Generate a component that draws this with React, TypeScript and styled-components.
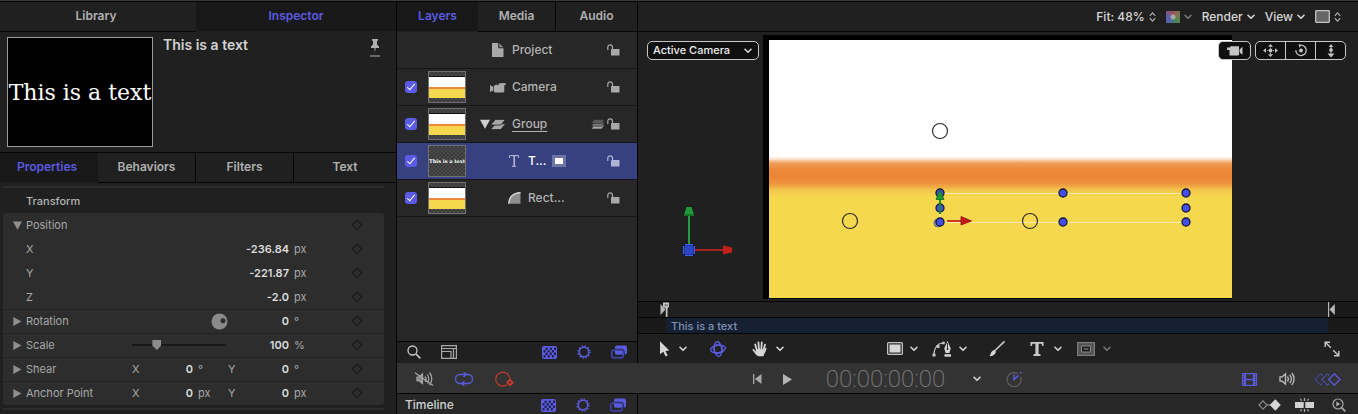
import React from "react";
import styled, { createGlobalStyle, css } from "styled-components";

const accent = "#5b5be0";
const sans = `Inter, "Liberation Sans", sans-serif`;

const GlobalStyle = createGlobalStyle`
  *, *::before, *::after { box-sizing: border-box; }
  body { margin: 0; background: #202020; font-family: ${sans}; font-size: 12px; color: #b4b4b4; }
  button, select, input { font: inherit; color: inherit; }
  h2, ul, p { margin: 0; padding: 0; }
  ul { list-style: none; }
  svg { display: block; flex: none; }
`;

/* ---------- shell ---------- */

const Shell = styled.div`
  display: grid;
  grid-template-columns: 397px minmax(0, 1fr);
  height: 100vh;
  overflow: hidden;
  border-top: 1px solid #383838;
`;

const Main = styled.main`
  display: flex;
  flex-direction: column;
  min-height: 0;
  border-top: 1px solid #050505;
`;

const Workspace = styled.div`
  flex: 1;
  display: grid;
  grid-template-columns: 241px minmax(0, 1fr);
  min-height: 0;
`;

const Column = styled.section<{ $divided?: boolean }>`
  display: flex;
  flex-direction: column;
  min-width: 0;
  border-right: ${(p) => (p.$divided ? "1px solid #050505" : "0")};
`;

/* ---------- tabs ---------- */

const TabBar = styled.div<{ $columns: string; $lined?: boolean }>`
  display: grid;
  grid-template-columns: ${(p) => p.$columns};
  height: 30px;
  flex: none;
  ${(p) => p.$lined && css`
    height: 31px;
    border-top: 1px solid #050505;
  `}
`;

const Tab = styled.button<{ $active?: boolean }>`
  border: 0;
  border-bottom: 1px solid ${(p) => (p.$active ? "#202020" : "#050505")};
  padding: 0 0 2px;
  background: ${(p) => (p.$active ? "#181818" : "#202020")};
  color: ${(p) => (p.$active ? accent : "#b0b0b0")};
  font-size: 12px;
  font-weight: 600;
  line-height: 16px;
  & + &:not(:nth-child(2)) { border-left: 1px solid #050505; }
`;

/* ---------- inspector ---------- */

const Inspector = styled.aside`
  background: #202020;
  border-top: 1px solid #050505;
  border-right: 1px solid #050505;
  ${Tab}:first-child { padding-right: 4px; }
`;

const Summary = styled.div`
  display: flex;
  align-items: flex-start;
  gap: 10px;
  padding: 5px 15px 5px 7px;
`;

const Preview = styled.div`
  width: 146px;
  height: 110px;
  display: flex;
  align-items: center;
  justify-content: center;
  background: #000;
  border: 1px solid #9a9a9a;
  color: #fff;
  font-family: "DejaVu Serif", serif;
  font-size: 22px;
  white-space: nowrap;
  overflow: hidden;
`;

const Title = styled.h2`
  flex: 1;
  color: #d2d2d2;
  font-size: 14px;
  font-weight: 600;
  line-height: 16px;
`;

const Properties = styled.div`
  width: 381px;
  margin: 3px 0 0 3px;
  font-size: 11px;
`;

const Rule = styled.div`
  height: 2px;
  background: #2d2d2d;
`;

const SectionTitle = styled.h2`
  padding: 2px 0 0 23px;
  color: #b4b4b4;
  font-size: 11px;
  font-weight: 500;
  line-height: 23px;
`;

const Group = styled.div`
  margin-bottom: 3px;
  background: #2d2d2d;
  border-radius: 3px;
`;

const Row = styled.div<{ $lined?: boolean }>`
  display: grid;
  grid-template-columns: 13px 1fr 16px 45px 35px 16px 45px 58px 20px;
  align-items: center;
  height: 24px;
  padding: 0 17px 1px 10px;
  border-top: 1px solid ${(p) => (p.$lined ? "#222" : "transparent")};
`;

const Label = styled.span`
  grid-column: 2;
  color: #a8a8a8;
  white-space: nowrap;
`;

const Axis = styled.span`
  color: #a8a8a8;
`;

const Value = styled.span<{ $end: number; $wide?: boolean }>`
  grid-column: ${(p) => (p.$wide ? p.$end - 2 : p.$end - 1)} / ${(p) => p.$end};
  color: #dcdcdc;
  font-weight: 600;
  text-align: right;
`;

const Unit = styled.span`
  padding-left: 5px;
  color: #a8a8a8;
`;

const Toggle = styled.button`
  display: flex;
  align-items: center;
  border: 0;
  padding: 0;
  background: none;
`;

const KeyButton = styled(Toggle)`
  grid-column: 9;
  justify-content: center;
`;

const DialCell = styled(Toggle)`
  grid-column: 3 / 6;
  justify-content: flex-end;
`;

const Slider = styled.input`
  grid-column: 3 / 6;
  appearance: none;
  width: 94px;
  height: 12px;
  margin: 0;
  background: linear-gradient(#191919, #191919) center / 100% 2px no-repeat;
  &::-webkit-slider-thumb {
    appearance: none;
    width: 9px;
    height: 10px;
    background: #8c8c8c;
    clip-path: polygon(0 0, 100% 0, 100% 55%, 50% 100%, 0 55%);
  }
`;

/* ---------- layers ---------- */

const LayerList = styled.ul`
  flex: 1;
  background: #272727;
`;

const LayerRow = styled.li<{ $selected?: boolean }>`
  display: flex;
  align-items: center;
  height: 37px;
  padding: 0 16px 0 8px;
  border-bottom: 1px solid #161616;
  background: ${(p) => (p.$selected ? "#38417f" : "#272727")};
  color: ${(p) => (p.$selected ? "#fff" : "#b4b4b4")};
`;

const Check = styled.input`
  appearance: none;
  flex: none;
  width: 12px;
  height: 12px;
  margin: 0;
  border-radius: 3px;
  background: #5a5be6;
  display: grid;
  place-items: center;
  &::after {
    content: "";
    width: 4px;
    height: 8px;
    margin-bottom: 2px;
    border: solid #fff;
    border-width: 0 1px 1px 0;
    transform: rotate(40deg);
  }
`;

const Thumb = styled.div<{ $art?: boolean }>`
  flex: none;
  width: 38px;
  height: 32px;
  margin-left: 11px;
  display: flex;
  align-items: center;
  justify-content: center;
  overflow: hidden;
  border: 1px solid #707070;
  background: ${(p) => (p.$art
    ? "linear-gradient(transparent 4px, #111 4px 5px, #fff 5px 15px, #f0883a 15px 17px, #f5d84e 17px 26px, transparent 26px) center / 100% 100%,"
    : "")} repeating-conic-gradient(#3a3a3a 0 25%, #4a4a4a 0 50%) 0 0 / 4px 4px;
  color: #fff;
  font-family: "DejaVu Serif", serif;
  font-size: 5px;
  font-weight: 700;
  white-space: nowrap;
`;

const ThumbSpace = styled.div`
  width: 61px;
`;

const LayerName = styled.div<{ $depth: number }>`
  flex: 1;
  display: grid;
  grid-template-columns: 10px 16px auto auto 1fr;
  align-items: center;
  justify-items: center;
  padding-left: ${(p) => 14 + p.$depth * 16}px;
`;

const LayerLabel = styled.span<{ $underlined?: boolean }>`
  grid-column: 3;
  margin: 0 6px;
  font-weight: 500;
  line-height: 16px;
  text-decoration: ${(p) => (p.$underlined ? "underline" : "none")};
  text-underline-offset: 3px;
`;

const LayerGlyph = styled.span`
  grid-column: 2;
`;

const Footer = styled.div`
  display: flex;
  align-items: center;
  gap: 11px;
  height: 23px;
  flex: none;
  padding: 0 6px 1px 5px;
  border-top: 1px solid #050505;
  border-bottom: 1px solid #050505;
  background: #202020;
`;

const FilterGroup = styled.div`
  display: flex;
  align-items: center;
  gap: 11px;
  margin-left: auto;
`;

const IconButton = styled.button<{ $w?: number }>`
  display: flex;
  align-items: center;
  justify-content: center;
  width: ${(p) => p.$w ?? 24}px;
  height: 20px;
  flex: none;
  border: 0;
  padding: 0;
  background: none;
  color: #d0d0d0;
`;

const ToolPair = styled.div`
  display: flex;
  align-items: center;
  gap: 7px;
`;

/* ---------- viewer ---------- */

const ViewerHeader = styled.div`
  display: flex;
  align-items: center;
  justify-content: flex-end;
  gap: 10px;
  height: 30px;
  flex: none;
  padding: 0 17px 0 0;
  border-bottom: 1px solid #050505;
  background: #202020;
`;

const MenuButton = styled.button`
  display: flex;
  align-items: center;
  gap: 4px;
  border: 0;
  padding: 0;
  background: none;
  color: #d6d6d6;
  font-size: 12px;
  font-weight: 500;
  line-height: 16px;
`;

const Swatch = styled.span`
  width: 14px;
  height: 12px;
  background: radial-gradient(circle, #a9a9a9 0 2px, transparent 3px),
    conic-gradient(from 45deg, #8a6a50, #4f8a4c 25%, #4a6f90 40%, #5a5fb0 60%, #9a4f60 85%, #8a6a50);
`;

const Viewport = styled.div`
  position: relative;
  flex: 1;
  display: flex;
  padding: 3px 126px 2px 125px;
  background: #202020;
`;

const Frame = styled.div`
  flex: 1;
  display: flex;
  padding: 5px 0 1px 6px;
  background: #000;
`;

const Stage = styled.div`
  flex: 1;
  overflow: hidden;
  background: linear-gradient(
    #fff 116px, #fbe3d0 119px, #f0a05c 123px, #ed8a3c 129px, #ec8536 137px,
    #ee9140 143px, #f0a544 146px, #f3c54a 150px, #f6d84e 157px
  );
`;

const AxisGizmo = styled.svg`
  position: absolute;
  left: 42px;
  bottom: 45px;
`;

const CameraPicker = styled.label`
  position: absolute;
  top: 9px;
  left: 9px;
  display: flex;
  align-items: center;
  width: 112px;
  height: 19px;
  padding-right: 6px;
  border: 1px solid #c8c8c8;
  border-radius: 5px;
  background: #101010;
  color: #eee;
  & svg { pointer-events: none; }
`;

const CameraSelect = styled.select`
  appearance: none;
  flex: 1;
  min-width: 0;
  border: 0;
  padding: 0 0 1px 5px;
  background: none;
  font-size: 11px;
  font-weight: 500;
  line-height: 16px;
  outline: 0;
`;

const ViewControls = styled.div`
  position: absolute;
  top: 9px;
  right: 12px;
  display: flex;
  gap: 4px;
`;

const Pill = styled.div`
  display: flex;
  height: 19px;
  border: 1px solid #c8c8c8;
  border-radius: 5px;
  background: #101010;
`;

const PillButton = styled(IconButton)`
  height: 17px;
  & + & { border-left: 1px solid #c8c8c8; }
`;

const Ruler = styled.div`
  display: flex;
  justify-content: space-between;
  height: 17px;
  flex: none;
  padding: 0 22px;
  border-top: 1px solid #050505;
  border-bottom: 1px solid #050505;
  background: linear-gradient(90deg, #191919 28px, #202020 28px calc(100% - 30px), #191919 calc(100% - 30px));
`;

const ClipTrack = styled.div`
  flex: none;
  padding: 0 30px 0 28px;
  border-bottom: 1px solid #050505;
  background: #191919;
`;

const Clip = styled.div`
  padding: 1px 0 0 5px;
  background: #152033;
  color: #8291b4;
  font-size: 11px;
  font-weight: 500;
  line-height: 14px;
`;

const Bar = styled.div<{ $tone: string; $height: number }>`
  display: grid;
  grid-template-columns: 1fr auto 1fr;
  align-items: center;
  height: ${(p) => p.$height}px;
  flex: none;
  border-bottom: 1px solid #050505;
  background: ${(p) => p.$tone};
`;

const TransportBar = styled(Bar)`
  padding-top: 2px;
`;

const Cluster = styled.div<{ $gap: number; $left?: number; $right?: number; $end?: boolean }>`
  display: flex;
  align-items: center;
  justify-content: ${(p) => (p.$end ? "flex-end" : "flex-start")};
  gap: ${(p) => p.$gap}px;
  padding: 0 ${(p) => p.$right ?? 0}px 0 ${(p) => p.$left ?? 0}px;
`;

const Timecode = styled.span`
  margin: 0 14px 0 20px;
  color: #7c7c7c;
  font-family: Roboto, ${sans};
  font-size: 24px;
  font-weight: 200;
  line-height: 24px;
`;

const TimelineBar = styled.div`
  display: grid;
  grid-template-columns: 241px minmax(0, 1fr);
  height: 20px;
  flex: none;
  background: #272727;
`;

const TimelineHead = styled.div`
  display: flex;
  align-items: center;
  padding: 1px 7px 0 8px;
  border-right: 1px solid #050505;
`;

const TimelineTools = styled.div`
  display: flex;
  align-items: center;
  justify-content: flex-end;
  gap: 11px;
  padding: 1px 7px 0 0;
`;

const TimelineTitle = styled.h2`
  color: #d0d0d0;
  font-size: 12px;
  font-weight: 500;
  line-height: 16px;
`;

/* ---------- icons ---------- */

const Chevron = ({ color = "#d6d6d6" }: { color?: string }) => (
  <svg width="8" height="6" viewBox="0 0 8 6" fill="none" stroke={color} strokeWidth="1.6" strokeLinecap="round" strokeLinejoin="round">
    <path d="M1 1.3 4 4.3 7 1.3" />
  </svg>
);

const UpDown = () => (
  <svg width="7" height="12" viewBox="0 0 7 12" fill="none" stroke="#b4b4b4" strokeWidth="1.1">
    <path d="M.8 4.800 3.500 1.800 6.200 4.800M.8 7.200 3.500 10.200 6.200 7.200" />
  </svg>
);

const Triangle = ({ open, color = "#8f8f8f", size = 9 }: { open?: boolean; color?: string; size?: number }) => (
  <svg width={size} height={size} viewBox="0 0 8 8" fill={color}>
    <path d={open ? "M0 .5h8L4 7.8z" : "M.3 0 7.5 4 .3 8z"} />
  </svg>
);

const Diamond = () => (
  <svg width="12" height="12" viewBox="0 0 12 12" fill="none" stroke="#191919" strokeWidth="1.1">
    <path d="M6 1.2 10.8 6 6 10.8 1.2 6z" />
  </svg>
);

const Pin = () => (
  <svg width="12" height="20" viewBox="0 0 12 20" fill="#b0b0b0">
    <path d="M3 2h6v1.400l-1 .6V7.500l2 2v1.600H6.600L6 15.500l-.6-4.400H2V9.500l2-2V4l-1-.6z" />
    <path d="M1 18.500h10v1H1z" />
  </svg>
);

const Dial = () => (
  <svg width="17" height="17" viewBox="0 0 17 17">
    <circle cx="8.500" cy="8.500" r="8" fill="#8a8a8a" />
    <circle cx="12" cy="7.800" r="2.500" fill="#2b2b2b" />
  </svg>
);

const DocIcon = () => (
  <svg width="12" height="14" viewBox="0 0 12 14" fill="#a8a8a8">
    <path d="M0 0h6.200v5.300H11.500V14H0z" />
    <path d="M7.300.2 11.500 4.300H7.300z" fill="#8a8a8a" />
  </svg>
);

const CameraIcon = () => (
  <svg width="16" height="11" viewBox="0 0 16 11" fill="#a8a8a8">
    <path d="M0 3h1v1.500L3.300 4v5.500L1 8.500V10H0z" />
    <path d="M4 4 6 2.500 8 3.300 9 1.500 12 1l3.800.2v1.500l-1.500.5V9.500l-1 1H5l-1-1z" />
  </svg>
);

const GroupIcon = () => (
  <svg width="16" height="11" viewBox="0 0 16 11" fill="#a8a8a8" stroke="#272727" strokeWidth=".8">
    <path d="M5.500 4.800h10L10.800 10.500H.5z" />
    <path d="M5.500.5h10L10.800 6H.5z" />
  </svg>
);

const StackIcon = () => (
  <svg width="14" height="11" viewBox="0 0 14 11" strokeWidth=".6" stroke="#272727">
    <path d="M3 5.800h10.500L10.800 10H.3z" fill="#a8a8a8" />
    <path d="M3 3.200h10.500L10.800 7.200H.3z" fill="#7a7a7a" />
    <path d="M3 .5h10.500L10.800 4.500H.3z" fill="#5a5a5a" />
  </svg>
);

const TextIcon = () => (
  <svg width="10" height="12" viewBox="0 0 10 12" fill="none" stroke="#b9bcda" strokeWidth="1">
    <path d="M.6 3V.6h8.800V3M3 11.300h4M5 .6v10.700" />
    <path d="M5.400 1v10" />
  </svg>
);

const ShapeIcon = () => (
  <svg width="13" height="12" viewBox="0 0 13 12">
    <path d="M.5 11.800C.8 5 5 .8 12.500.3v11.500z" fill="#8e8e8e" />
    <path d="M.6 11.800C1 5 5.200 1 12.500.6" fill="none" stroke="#d8d8d8" strokeWidth="1.200" />
  </svg>
);

const LockIcon = ({ color = "#a8a8a8" }: { color?: string }) => (
  <svg width="13" height="12" viewBox="0 0 13 12">
    <path d="M.8 6V3.200a2.300 2.300 0 0 1 4.700 0V5" fill="none" stroke={color} strokeWidth="1.200" />
    <rect x="4" y="5" width="8.500" height="6.500" rx=".6" fill={color} />
  </svg>
);

const MaskBadge = () => (
  <svg width="14" height="12" viewBox="0 0 14 12">
    <path d="M0 0h14v12H0z" fill="#6d74a6" />
    <path d="M3 3h8v6H3z" fill="#fff" />
  </svg>
);

const SearchIcon = () => (
  <svg width="14" height="14" viewBox="0 0 14 14" fill="none" stroke="#c8c8c8" strokeWidth="1.300">
    <circle cx="5.500" cy="5.500" r="4.500" />
    <path d="m9 9 4.300 4.300" strokeWidth="1.700" />
  </svg>
);

const PanelIcon = () => (
  <svg width="16" height="14" viewBox="0 0 16 14" fill="none" stroke="#a8a8a8" strokeWidth="1.200">
    <path d="M.6.600h14.800v12.800H.6zM.6 3.500h14.800M12.500 3.500v10M10 13V6.500H.6" />
    <path d="M1.200 4.200h10.600v1.600H1.200z" fill="#2b2b2b" stroke="none" />
  </svg>
);

const CheckerIcon = () => (
  <svg width="15" height="13" viewBox="0 0 15 13">
    <rect width="15" height="13" rx="2" fill={accent} />
    {[0, 1, 2, 3].map((r) => [0, 1, 2].map((c) => (
      <rect key={`${r}${c}`} x={1.500 + c * 4.200 + (r % 2 === 0 ? 2.100 : 0)} y={1.700 + r * 2.500} width="2" height="2.200" fill="#1c1c3a" />
    )))}
  </svg>
);

const GearIcon = () => (
  <svg width="14" height="14" viewBox="0 0 14 14" fill="none" stroke={accent}>
    <circle cx="7" cy="7" r="4.700" strokeWidth="1.600" />
    <circle cx="7" cy="7" r="6" strokeWidth="1.500" strokeDasharray="1.350 1.792" />
  </svg>
);

const WindowsIcon = () => (
  <svg width="16" height="14" viewBox="0 0 16 14">
    <rect x="4" y=".5" width="12" height="9" rx="1.800" fill={accent} />
    <rect x=".8" y="5.200" width="11.400" height="7.600" rx="1.800" fill="none" stroke="#24243c" strokeWidth="3" />
    <path d="M4 5.500h8V9.500H5.500Q4 9.500 4 8z" fill={accent} />
    <rect x=".8" y="5.200" width="11.400" height="7.600" rx="1.800" fill="none" stroke="#4a4abf" strokeWidth="1.300" />
  </svg>
);

const SmallCamera = () => (
  <svg width="16" height="10" viewBox="0 0 16 10" fill="#c4c4c4">
    <path d="M0 1.500h2.500L4 .3h8v8.500l-1 .7H2.500V4H0zM12.600 3.500 15.500.8v8L12.600 6.500z" />
  </svg>
);

const PanIcon = () => (
  <svg width="15" height="13" viewBox="0 0 15 13" fill="#c4c4c4">
    <path d="M7.500 0 10 2.800H5zM7.500 13 10 10.200H5zM0 6.500 3 4.300v4.400zM15 6.500 12 4.300v4.400z" />
    <circle cx="7.500" cy="6.500" r="1.900" />
    <path d="M7 3.500h1v1H7zM7 8.700h1v1H7zM4.200 6h1v1h-1zM9.800 6h1v1h-1z" />
  </svg>
);

const OrbitIcon = () => (
  <svg width="14" height="13" viewBox="0 0 14 13">
    <path d="M7.500 1.200a5.200 5.200 0 1 1-5.700 5" fill="none" stroke="#c4c4c4" strokeWidth="1.300" />
    <path d="M4.500.3 8 .8 5.500 3.800z" fill="#c4c4c4" />
    <circle cx="7" cy="6.500" r="1.900" fill="#c4c4c4" />
  </svg>
);

const DollyIcon = () => (
  <svg width="8" height="14" viewBox="0 0 8 14" fill="#c4c4c4">
    <path d="M4 0 6.300 3H1.700zM4 13.500 7.500 9.500H.5z" />
    <circle cx="4" cy="6" r="1.900" />
    <path d="M3.500 3h1v1h-1zM3.500 8.300h1v1.500h-1z" />
  </svg>
);

const InMarker = () => (
  <svg width="10" height="15" viewBox="0 0 10 15">
    <path d="M.5 2v11l5-5.500z" fill="#b8b8b8" />
    <path d="M3 .5h6v4.300L7.500 6.500V15H5.800V6.500L3 4.800z" fill="#c6c6c6" />
    <path d="M4.800 2h.9v2.500h-.9zM6.700 2h.9v2.500h-.9z" fill="#555" />
  </svg>
);

const OutMarker = () => (
  <svg width="8" height="15" viewBox="0 0 8 15" fill="#b8b8b8">
    <path d="M0 0h1.200v15H0zM6.800 2v11L1.500 7.500z" />
  </svg>
);

const ArrowIcon = () => (
  <svg width="11" height="16" viewBox="0 0 11 16" fill="#d6d6d6">
    <path d="M1 .3 10.300 9.600 6.500 9.900 8.700 14.600 6.600 15.600 4.400 10.700 1 13.300z" />
  </svg>
);

const Rotate3D = () => (
  <svg width="18" height="18" viewBox="0 0 18 18" fill="none" stroke={accent} strokeWidth="1.400">
    <ellipse cx="9" cy="9" rx="7.500" ry="3.700" transform="rotate(-8 9 9)" />
    <ellipse cx="9" cy="9" rx="3.700" ry="7.500" transform="rotate(-8 9 9)" />
    <circle cx="9" cy="9" r="4.800" strokeWidth=".9" />
  </svg>
);

const HandIcon = () => (
  <svg width="16" height="16" viewBox="0 0 16 16" fill="none" stroke="#d6d6d6" strokeLinecap="round">
    <path d="M4.800 9 3.200 3.500M7 8.500 6.400 1.300M9.300 8.500 9.800 1.500M11.300 9.500 13 3.700" strokeWidth="1.800" />
    <path d="M5 13.500 1.300 8.800" strokeWidth="1.700" />
    <path d="M13.800 7.500 12.300 11.500" strokeWidth="1.600" />
    <path d="M4 8.200h8l1 1.500-1.500 5.600H6L3.500 12z" fill="#d6d6d6" stroke="none" />
  </svg>
);

const RectIcon = () => (
  <svg width="16" height="13" viewBox="0 0 16 13">
    <rect x=".6" y=".6" width="14.800" height="11.800" rx="1" fill="#333" stroke="#c4c4c4" strokeWidth="1.200" />
    <path d="M2.500 2.500h11v8h-11z" fill="#d6d6d6" />
  </svg>
);

const PenIcon = () => (
  <svg width="20" height="16" viewBox="0 0 20 16">
    <path d="M1.800 13.500C2.500 7 5 2.500 10.500 2" fill="none" stroke="#c4c4c4" strokeWidth="1.200" />
    <path d="M.5 12.500h3v3h-3zM4.500 4h3v3h-3zM10 .8h2.800v2.400H10z" fill="#c4c4c4" />
    <path d="M15.500 0 18.700 7.500 17.300 12h-3.600L12.300 7.500z" fill="#d6d6d6" />
    <path d="M15.500 2v5" stroke="#202020" strokeWidth=".9" />
    <circle cx="15.500" cy="8" r="1" fill="#202020" />
    <path d="M12.500 13.200h6.500v2.500h-6.500z" fill="#d6d6d6" />
  </svg>
);

const BrushIcon = () => (
  <svg width="16" height="16" viewBox="0 0 16 16">
    <path d="M15 .8 6 9.500" stroke="#c4c4c4" strokeWidth="1.700" strokeLinecap="round" />
    <path d="M5.200 9 7 10.800C6.300 14 3 15.300.5 15.300 2 13.500 1.500 10 5.200 9z" fill="#d6d6d6" />
  </svg>
);

const BigT = () => (
  <svg width="14" height="14" viewBox="0 0 14 14" fill="#c8c8c8">
    <path d="M.5 0h13v4h-1.200L11.500 1.800H8.600v10l2 .6V14H3.400v-1.600l2-.6v-10H2.500L1.700 4H.5z" />
  </svg>
);

const MaskIcon = () => (
  <svg width="18" height="14" viewBox="0 0 18 14">
    <rect x=".6" y=".6" width="16.800" height="12.800" fill="#525252" stroke="#7c7c7c" strokeWidth="1.200" />
    <path d="M4.500 4h9v6h-9z" fill="#1c1c1c" stroke="#8a8a8a" strokeWidth="1" />
    <path d="M6.500 6.300h5v1.400h-5z" fill="#777" />
  </svg>
);

const ExpandIcon = () => (
  <svg width="16" height="16" viewBox="0 0 16 16" fill="none" stroke="#c8c8c8" strokeWidth="1.400">
    <path d="M1.200 6V1.200H6M14.800 10v4.800H10M1.500 1.500 6.800 6.800M9.200 9.200l5.300 5.300" />
  </svg>
);

const MutedIcon = () => (
  <svg width="20" height="16" viewBox="0 0 20 16" fill="none" stroke="#a8a8a8" strokeWidth="1.200">
    <path d="M3 6h2l3.500-3v9.500L5 9.700H3z" fill="#8a8a8a" />
    <path d="M11 5.500c1.300 1.500 1.300 3.500 0 5M13.300 3.500c2 2.500 2 6.500 0 9M15.500 1.500c3 3.500 3 9 0 12.500M1 1.800 19 14.500" />
  </svg>
);

const LoopIcon = () => (
  <svg width="18" height="14" viewBox="0 0 18 14" fill="none" stroke={accent} strokeWidth="1.300">
    <path d="M7 11.500H5a4.500 4.500 0 0 1 0-9h6M11 2.500h2a4.500 4.500 0 0 1 0 9H7" />
    <path d="M8.500 0 11.200 2.500 8.500 5M9.500 9 6.800 11.500 9.500 14" />
  </svg>
);

const RecordIcon = () => (
  <svg width="20" height="16" viewBox="0 0 20 16" fill="none" stroke="#c43a2c">
    <path d="M13 13.800a7 7 0 1 1 2.800-5.200" strokeWidth="1.200" />
    <path d="M16 8.800 18.700 11.500 16 14.200 13.300 11.500z" strokeWidth="1.900" fill="#333" />
  </svg>
);

const PrevIcon = () => (
  <svg width="9" height="10" viewBox="0 0 9 10" fill="#a8a8a8">
    <path d="M0 0h1.300v10H0zM8.500 0v10L1.800 5z" />
  </svg>
);

const PlayIcon = () => (
  <svg width="9" height="11" viewBox="0 0 9 11" fill="#b4b4b4">
    <path d="M0 0 9 5.500 0 11z" />
  </svg>
);

const ClockIcon = () => (
  <svg width="17" height="16" viewBox="0 0 17 16" fill="none">
    <path d="M12 2.800a7 7 0 1 0 2.500 3" stroke="#5e5e5e" strokeWidth="1.200" />
    <path d="M8 3.500v5L12.500 4.500M14 2.500 15.500 1" stroke={accent} strokeWidth="1.500" />
  </svg>
);

const FilmIcon = () => (
  <svg width="15" height="13" viewBox="0 0 15 13">
    <path d="M0 0h15v13H0z" fill={accent} />
    <path d="M4 1.300h7v4.500H4zM4 7.200h7v4.500H4z" fill="#333" />
    <path d="M1.500 1v11M13.500 1v11" stroke="#333" strokeWidth="1" strokeDasharray="1.200 1.200" />
  </svg>
);

const SpeakerIcon = () => (
  <svg width="16" height="14" viewBox="0 0 16 14" fill="none" stroke="#c0c0c0" strokeWidth="1.300">
    <path d="M1 4.800h2.200L6.500 2v10L3.200 9.200H1z" />
    <path d="M8.500 4.500c1 1.500 1 3.500 0 5M10.700 2.800c2 2.500 2 6 0 8.400M12.800 1c3 3.500 3 8.500 0 12" />
  </svg>
);

const DiamondsIcon = () => (
  <svg width="27" height="13" viewBox="0 0 27 13" fill="none">
    <path d="M6.800.8 1 6.500l5.800 5.700L8.500 10.500" stroke="#42428c" strokeWidth="1.200" />
    <path d="M8.500 2.500 6.800.8M13.500.8 7.800 6.500l5.700 5.700 1.700-1.700M15.200 2.500 13.500.8" stroke="#4c4caa" strokeWidth="1.200" />
    <path d="M20.300.8 26 6.500l-5.700 5.700-5.700-5.700z" stroke={accent} strokeWidth="1.300" />
  </svg>
);

const KeyframeIcon = () => (
  <svg width="23" height="12" viewBox="0 0 23 12">
    <path d="M5 1.800 9 6 5 10.200 1 6z" fill="none" stroke="#8a8a8a" strokeWidth="1.200" />
    <path d="M9 6h5" stroke="#8a8a8a" strokeWidth="1.200" />
    <path d="M17.300.3 22.800 6l-5.500 5.700L11.800 6z" fill="#d6d6d6" />
  </svg>
);

const SnapIcon = () => (
  <svg width="19" height="14" viewBox="0 0 19 14">
    <path d="M0 4h8.700v6H0zM10.300 4H19v6h-8.700z" fill="#d0d0d0" />
    <path d="M9.500 0v3M9.500 11V14M5.500 .8 6.500 2.800M13.500 .8 12.500 2.800M5.500 13.200 6.500 11.200M13.500 13.200 12.500 11.200" stroke="#b0b0b0" strokeWidth="1.200" />
  </svg>
);

const ZoomIcon = () => (
  <svg width="14" height="14" viewBox="0 0 14 14" fill="none" stroke="#a8a8a8" strokeWidth="1.200">
    <circle cx="6" cy="6" r="5" />
    <path d="M9.700 9.700 13.300 13.300" strokeWidth="1.800" />
    <path d="M4.300 3.500 8.300 6 4.300 8.500z" fill="#a8a8a8" stroke="none" />
  </svg>
);

const LayoutIcon = () => (
  <svg width="15" height="13" viewBox="0 0 15 13">
    <rect x=".7" y=".7" width="13.600" height="11.600" rx=".5" fill="#666" stroke="#c4c4c4" strokeWidth="1.300" />
  </svg>
);

/* ---------- canvas artwork ---------- */

const handles = [[171, 153], [294, 153], [417, 153], [171, 168], [417, 168], [294, 182], [417, 182]];
const guides = [[171, 91], [81, 181], [261, 181]];

const Handles = () => (
  <svg width="463" height="258" viewBox="0 0 463 258" fill="none">
    <path d="M171 153.500H417M171 182.500H417M171 153V182M417 153V182" stroke="#fbeeb0" />
    {guides.map(([x, y]) => (
      <circle key={`${x}-${y}`} cx={x} cy={y} r="7.500" stroke="#2c2c2c" strokeWidth="1.200" />
    ))}
    <circle cx="169" cy="183" r="4" fill="#8d93b0" stroke="#667" />
    {[...handles, [171, 182]].map(([x, y]) => (
      <circle key={`${x}-${y}`} cx={x} cy={y} r="4" fill="#4350e6" stroke="#15153a" strokeWidth="1.300" />
    ))}
    <path d="M171 174V158" stroke="#178a2c" strokeWidth="2" />
    <path d="M171 150 175 159.500H167z" fill="#1a9a30" stroke="#0f6a20" strokeWidth=".8" />
    <path d="M178 181H192" stroke="#c41414" strokeWidth="1.600" />
    <path d="M192 176.500 202.500 181 192 185z" fill="#c41818" stroke="#8d0f0f" strokeWidth=".8" />
  </svg>
);

const Gizmo = () => (
  <AxisGizmo width="54" height="56" viewBox="0 0 54 56">
    <path d="M9 45V15" stroke="#2b9a45" strokeWidth="2" />
    <path d="M6.500 7h5L14 15H4z" fill="#1f9a3a" />
    <path d="M4 14h10v2H4z" fill="#157028" />
    <path d="M15 50H43" stroke="#a82020" strokeWidth="2" />
    <path d="M43 45.500 52 47.500v5L43 54.500z" fill="#c02018" />
    <path d="M3 44h12v12H3z" fill="#12183c" />
    <path d="M5 46h8v8H5z" fill="#2c44c8" />
    <path d="M5 44.700h8M5 55.300h8M3.700 46v8M14.300 46v8" stroke="#3a5cf0" strokeWidth="1.400" />
  </AxisGizmo>
);

/* ---------- data ---------- */

const layers = [
  { name: "Project", icon: <DocIcon />, depth: 0, thumb: "none" },
  { name: "Camera", icon: <CameraIcon />, depth: 0, thumb: "art" },
  { name: "Group", icon: <GroupIcon />, depth: 0, thumb: "art", group: true },
  { name: "T...", icon: <TextIcon />, depth: 1, thumb: "text", selected: true },
  { name: "Rect...", icon: <ShapeIcon />, depth: 1, thumb: "art" },
];

const positions = [["X", "-236.84"], ["Y", "-221.87"], ["Z", "-2.0"]];
const pairs = [["Shear", "°"], ["Anchor Point", "px"]];

const Keyframe = ({ of }: { of: string }) => (
  <KeyButton aria-label={`${of} keyframe`}><Diamond /></KeyButton>
);

const Filters = () => (
  <FilterGroup>
    <IconButton aria-label="Show masks"><CheckerIcon /></IconButton>
    <IconButton aria-label="Show behaviors"><GearIcon /></IconButton>
    <IconButton aria-label="Show filters"><WindowsIcon /></IconButton>
  </FilterGroup>
);

export default function App() {
  return (
    <>
      <GlobalStyle />
      <Shell>
        <Inspector>
          <TabBar $columns="196px 1fr">
            <Tab>Library</Tab>
            <Tab $active>Inspector</Tab>
          </TabBar>
          <Summary>
            <Preview>This is a text</Preview>
            <Title>This is a text</Title>
            <Toggle aria-label="Pin"><Pin /></Toggle>
          </Summary>
          <TabBar $columns="98px 97px 98px 1fr" $lined>
            <Tab $active>Properties</Tab>
            <Tab>Behaviors</Tab>
            <Tab>Filters</Tab>
            <Tab>Text</Tab>
          </TabBar>
          <Properties>
            <Rule />
            <SectionTitle>Transform</SectionTitle>
            <Group>
              <Row>
                <Toggle aria-label="Collapse Position"><Triangle open /></Toggle>
                <Label>Position</Label>
                <Keyframe of="Position" />
              </Row>
              {positions.map(([axis, value]) => (
                <Row key={axis}>
                  <Label>{axis}</Label>
                  <Value $end={8} $wide>{value}</Value>
                  <Unit>px</Unit>
                  <Keyframe of={axis} />
                </Row>
              ))}
              <Row $lined>
                <Toggle aria-label="Expand Rotation"><Triangle /></Toggle>
                <Label>Rotation</Label>
                <DialCell aria-label="Rotation dial"><Dial /></DialCell>
                <Value $end={8} $wide>0</Value>
                <Unit>°</Unit>
                <Keyframe of="Rotation" />
              </Row>
              <Row $lined>
                <Toggle aria-label="Expand Scale"><Triangle /></Toggle>
                <Label>Scale</Label>
                <Slider type="range" min={0} max={100} defaultValue={24} aria-label="Scale" />
                <Value $end={8} $wide>100</Value>
                <Unit>%</Unit>
                <Keyframe of="Scale" />
              </Row>
              {pairs.map(([label, unit]) => (
                <Row $lined key={label}>
                  <Toggle aria-label={`Expand ${label}`}><Triangle /></Toggle>
                  <Label>{label}</Label>
                  <Axis>X</Axis>
                  <Value $end={5}>0</Value>
                  <Unit>{unit}</Unit>
                  <Axis>Y</Axis>
                  <Value $end={8}>0</Value>
                  <Unit>{unit}</Unit>
                  <Keyframe of={label} />
                </Row>
              ))}
            </Group>
            <Rule />
          </Properties>
        </Inspector>

        <Main>
          <Workspace>
            <Column $divided>
              <TabBar $columns="81px 77px 1fr">
                <Tab $active>Layers</Tab>
                <Tab>Media</Tab>
                <Tab>Audio</Tab>
              </TabBar>
              <LayerList>
                {layers.map((l) => (
                  <LayerRow key={l.name} $selected={l.selected}>
                    {l.thumb === "none" ? <ThumbSpace /> : (
                      <>
                        <Check type="checkbox" defaultChecked aria-label={`Show ${l.name}`} />
                        <Thumb $art={l.thumb === "art"}>{l.thumb === "text" && "This is a text"}</Thumb>
                      </>
                    )}
                    <LayerName $depth={l.depth}>
                      {l.group && <Triangle open color="#d0d0d0" size={10} />}
                      <LayerGlyph>{l.icon}</LayerGlyph>
                      <LayerLabel $underlined={l.group}>{l.name}</LayerLabel>
                      {l.selected && <MaskBadge />}
                    </LayerName>
                    {l.group && <StackIcon />}
                    <IconButton $w={16} aria-label={`Lock ${l.name}`}>
                      <LockIcon color={l.selected ? "#b0b3d8" : "#a8a8a8"} />
                    </IconButton>
                  </LayerRow>
                ))}
              </LayerList>
              <Footer>
                <IconButton aria-label="Search"><SearchIcon /></IconButton>
                <IconButton aria-label="Preview size"><PanelIcon /></IconButton>
                <Filters />
              </Footer>
            </Column>

            <Column>
              <ViewerHeader>
                <MenuButton>Fit: 48%<UpDown /></MenuButton>
                <MenuButton aria-label="Color channels"><Swatch /><Chevron color="#777" /></MenuButton>
                <MenuButton>Render<Chevron /></MenuButton>
                <MenuButton>View<Chevron /></MenuButton>
                <MenuButton aria-label="Layout"><LayoutIcon /><UpDown /></MenuButton>
              </ViewerHeader>
              <Viewport>
                <Frame>
                  <Stage><Handles /></Stage>
                </Frame>
                <Gizmo />
                <CameraPicker>
                  <CameraSelect aria-label="Camera" defaultValue="active">
                    <option value="active">Active Camera</option>
                  </CameraSelect>
                  <Chevron />
                </CameraPicker>
                <ViewControls>
                  <Pill>
                    <PillButton $w={31} aria-label="Camera"><SmallCamera /></PillButton>
                  </Pill>
                  <Pill>
                    <PillButton $w={29} aria-label="Pan"><PanIcon /></PillButton>
                    <PillButton $w={30} aria-label="Orbit"><OrbitIcon /></PillButton>
                    <PillButton $w={30} aria-label="Dolly"><DollyIcon /></PillButton>
                  </Pill>
                </ViewControls>
              </Viewport>
              <Ruler><InMarker /><OutMarker /></Ruler>
              <ClipTrack><Clip>This is a text</Clip></ClipTrack>
              <Bar $tone="#202020" $height={30}>
                <Cluster $gap={0} $left={14}>
                  <IconButton aria-label="Select"><ArrowIcon /></IconButton>
                  <IconButton $w={14} aria-label="Select options"><Chevron /></IconButton>
                  <IconButton $w={56} aria-label="3D transform"><Rotate3D /></IconButton>
                  <IconButton $w={28} aria-label="Pan"><HandIcon /></IconButton>
                  <IconButton $w={12} aria-label="Pan options"><Chevron /></IconButton>
                </Cluster>
                <Cluster $gap={14} $left={2}>
                  <ToolPair>
                    <IconButton $w={16} aria-label="Rectangle"><RectIcon /></IconButton>
                    <IconButton $w={8} aria-label="Shape options"><Chevron /></IconButton>
                  </ToolPair>
                  <ToolPair>
                    <IconButton $w={20} aria-label="Bezier"><PenIcon /></IconButton>
                    <IconButton $w={8} aria-label="Bezier options"><Chevron /></IconButton>
                  </ToolPair>
                  <IconButton $w={32} aria-label="Paint stroke"><BrushIcon /></IconButton>
                  <ToolPair>
                    <IconButton $w={20} aria-label="Text"><BigT /></IconButton>
                    <IconButton $w={8} aria-label="Text options"><Chevron /></IconButton>
                  </ToolPair>
                  <ToolPair>
                    <IconButton $w={20} aria-label="Mask"><MaskIcon /></IconButton>
                    <IconButton $w={8} aria-label="Mask options"><Chevron color="#777" /></IconButton>
                  </ToolPair>
                </Cluster>
                <Cluster $gap={0} $right={14} $end>
                  <IconButton aria-label="Full screen"><ExpandIcon /></IconButton>
                </Cluster>
              </Bar>
            </Column>
          </Workspace>

          <TransportBar $tone="#333" $height={31}>
            <Cluster $gap={16} $left={15}>
              <IconButton aria-label="Mute"><MutedIcon /></IconButton>
              <IconButton aria-label="Loop"><LoopIcon /></IconButton>
              <IconButton aria-label="Record"><RecordIcon /></IconButton>
            </Cluster>
            <Cluster $gap={6} $left={24}>
              <IconButton aria-label="Go to start"><PrevIcon /></IconButton>
              <IconButton aria-label="Play"><PlayIcon /></IconButton>
              <Timecode>00:00:00:00</Timecode>
              <IconButton aria-label="Timecode options"><Chevron /></IconButton>
              <IconButton $w={38} aria-label="Timing"><ClockIcon /></IconButton>
            </Cluster>
            <Cluster $gap={12} $right={17} $end>
              <IconButton aria-label="Video timeline"><FilmIcon /></IconButton>
              <IconButton $w={28} aria-label="Audio timeline"><SpeakerIcon /></IconButton>
              <IconButton $w={28} aria-label="Keyframes"><DiamondsIcon /></IconButton>
            </Cluster>
          </TransportBar>

          <TimelineBar>
            <TimelineHead>
              <TimelineTitle>Timeline</TimelineTitle>
              <Filters />
            </TimelineHead>
            <TimelineTools>
              <IconButton aria-label="Keyframe editor"><KeyframeIcon /></IconButton>
              <IconButton aria-label="Snapping"><SnapIcon /></IconButton>
              <IconButton aria-label="Zoom"><ZoomIcon /></IconButton>
            </TimelineTools>
          </TimelineBar>
        </Main>
      </Shell>
    </>
  );
}
